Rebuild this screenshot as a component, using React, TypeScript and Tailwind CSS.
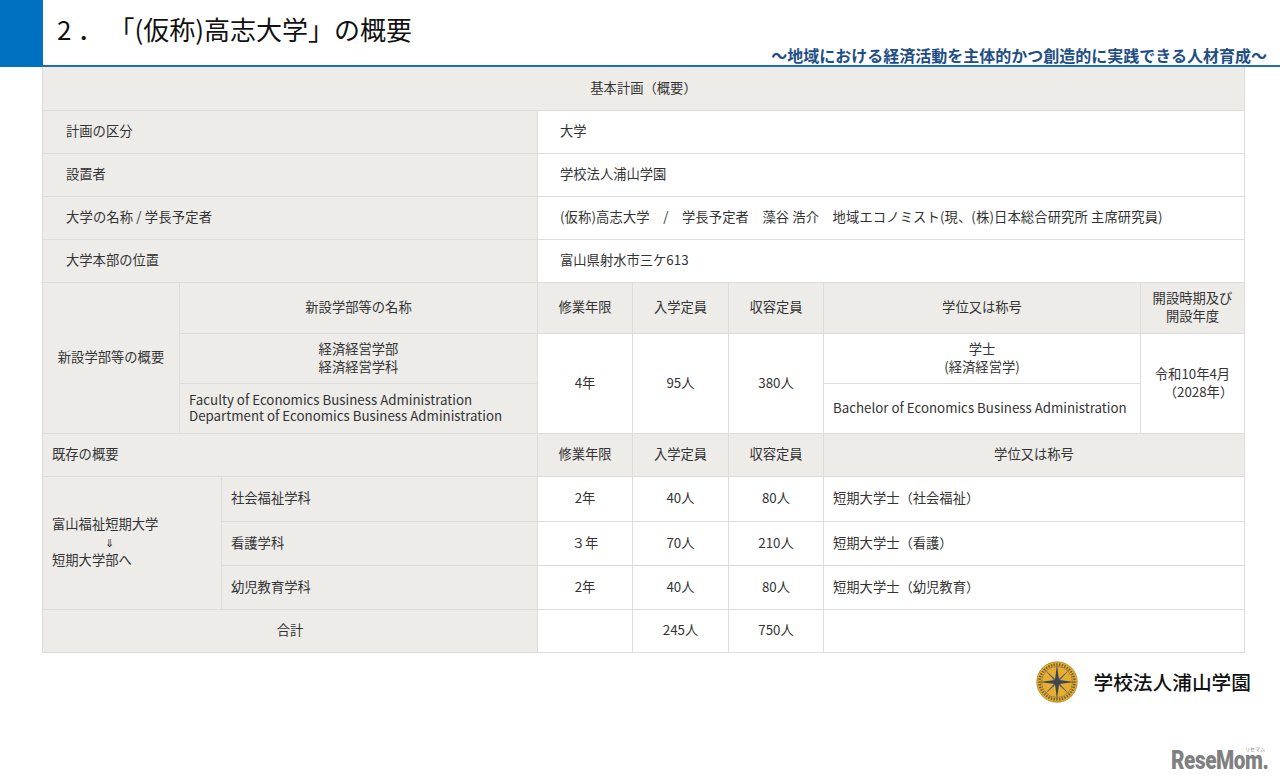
import type { ReactNode } from "react";

const gray = "bg-[#edece9]";
const white = "bg-white";

function Cell({
	className,
	children,
}: {
	className: string;
	children?: ReactNode;
}) {
	return <div className={`flex items-center pb-[2px] ${className}`}>{children}</div>;
}

function CompassLogo() {
	const ticks = Array.from({ length: 40 }, (_, i) => i * 9);
	return (
		<svg width="42" height="42" viewBox="0 0 42 42" aria-label="logo">
			<circle cx="21" cy="21" r="20.5" fill="#e6ad33" />
			<circle cx="21" cy="21" r="20.2" fill="none" stroke="#9a7a2e" strokeWidth="0.6" />
			<circle cx="21" cy="21" r="15.5" fill="none" stroke="#6b5c30" strokeWidth="0.5" />
			{ticks.map((deg) => (
				<rect
					key={deg}
					x="20.3"
					y="2.2"
					width="1.4"
					height="2.6"
					fill="#6f5f33"
					transform={`rotate(${deg} 21 21)`}
				/>
			))}
			<path d="M8 8 L21 19.6 L34 8 L22.4 21 L34 34 L21 22.4 L8 34 L19.6 21 Z" fill="#59606a" />
			<path
				d="M21 3.5 L23 19 L38.5 21 L23 23 L21 38.5 L19 23 L3.5 21 L19 19 Z"
				fill="#3d4550"
			/>
		</svg>
	);
}

function ResultRow({
	name,
	years,
	admission,
	capacity,
	degree,
}: {
	name: string;
	years: string;
	admission: string;
	capacity: string;
	degree: string;
}) {
	return (
		<>
			<Cell className={`${gray} pl-[9px]`}>{name}</Cell>
			<Cell className={`${white} justify-center`}>{years}</Cell>
			<Cell className={`${white} justify-center`}>{admission}</Cell>
			<Cell className={`${white} justify-center`}>{capacity}</Cell>
			<Cell className={`${white} col-span-2 pl-[9px]`}>{degree}</Cell>
		</>
	);
}

function InfoRow({ label, value }: { label: ReactNode; value: ReactNode }) {
	return (
		<>
			<Cell className={`${gray} col-span-3 pl-[23px]`}>{label}</Cell>
			<Cell className={`${white} col-span-5 pl-[22px]`}>{value}</Cell>
		</>
	);
}

export default function App() {
	return (
		<div className="h-[784px] w-[1280px] overflow-hidden bg-white font-['Noto_Sans_CJK_JP','Noto_Sans',sans-serif] text-[13.3px] leading-[18px] text-[#333]">
			<header className="flex h-[67px] border-b-2 border-[#1f6fb2]">
				<div className="h-[67px] w-[43px] shrink-0 bg-[#0070c0]" />
				<div className="relative flex-1">
					<h1 className="pl-[14px] pt-[10px] text-[26px] leading-[38px] whitespace-pre text-[#111]">
						<span className="mr-[6px]">2</span>．<span className="ml-[18px]">「(仮称)高志大学」の概要</span>
					</h1>
					<p className="absolute right-[13px] bottom-[-1px] text-[16px] leading-[22px] font-bold whitespace-nowrap text-[#1f4e86]">
						～地域における経済活動を主体的かつ創造的に実践できる人材育成～
					</p>
				</div>
			</header>

			<div className="ml-[42px] grid w-[1203px] grid-cols-[136px_41px_315px_94px_95px_94px_316px_103px] grid-rows-[43px_42px_42px_42px_42px_50px_49px_49px_42px_44px_43px_43px_42px] gap-px border border-t-0 border-[#dcdcda] bg-[#dcdcda]">
				<Cell className={`${gray} col-span-8 justify-center`}>基本計画（概要）</Cell>
				<InfoRow label="計画の区分" value="大学" />
				<InfoRow label="設置者" value="学校法人浦山学園" />
				<InfoRow
					label={<span className="tracking-[0.15px]">大学の名称 / 学長予定者</span>}
					value={
						<span className="tracking-[0.12px]">
							(仮称)高志大学　/　学長予定者　藻谷 浩介　地域エコノミスト(現、(株)日本総合研究所 主席研究員)
						</span>
					}
				/>
				<InfoRow label="大学本部の位置" value="富山県射水市三ケ613" />

				<Cell className={`${gray} row-span-3 justify-center`}>新設学部等の概要</Cell>
				<Cell className={`${gray} col-span-2 justify-center`}>新設学部等の名称</Cell>
				<Cell className={`${gray} justify-center`}>修業年限</Cell>
				<Cell className={`${gray} justify-center`}>入学定員</Cell>
				<Cell className={`${gray} justify-center`}>収容定員</Cell>
				<Cell className={`${gray} justify-center`}>学位又は称号</Cell>
				<Cell className={`${gray} justify-center text-center`}>
					<div>
						開設時期及び
						<br />
						開設年度
					</div>
				</Cell>

				<Cell className={`${gray} col-span-2 justify-center text-center`}>
					<div>
						経済経営学部
						<br />
						経済経営学科
					</div>
				</Cell>
				<Cell className={`${white} row-span-2 justify-center`}>4年</Cell>
				<Cell className={`${white} row-span-2 justify-center`}>95人</Cell>
				<Cell className={`${white} row-span-2 justify-center`}>380人</Cell>
				<Cell className={`${white} justify-center text-center`}>
					<div>
						学士
						<br />
						(経済経営学)
					</div>
				</Cell>
				<Cell className={`${white} row-span-2 justify-center text-center`}>
					<div>
						令和10年4月
						<br />
						<span className="ml-[12px]">（2028年）</span>
					</div>
				</Cell>
				<Cell className={`${gray} col-span-2 pl-[9px]`}>
					<div className="leading-[16px]">
						Faculty of Economics Business Administration
						<br />
						Department of Economics Business Administration
					</div>
				</Cell>
				<Cell className={`${white} pl-[9px]`}>Bachelor of Economics Business Administration</Cell>

				<Cell className={`${gray} col-span-3 pl-[9px]`}>既存の概要</Cell>
				<Cell className={`${gray} justify-center`}>修業年限</Cell>
				<Cell className={`${gray} justify-center`}>入学定員</Cell>
				<Cell className={`${gray} justify-center`}>収容定員</Cell>
				<Cell className={`${gray} col-span-2 justify-center`}>学位又は称号</Cell>

				<Cell className={`${gray} col-span-2 row-span-3 pl-[9px]`}>
					<div>
						<div>富山福祉短期大学</div>
						<div className="pl-[53px] text-[11px]">⇓</div>
						<div>短期大学部へ</div>
					</div>
				</Cell>
				<ResultRow name="社会福祉学科" years="2年" admission="40人" capacity="80人" degree="短期大学士（社会福祉）" />
				<ResultRow name="看護学科" years="３年" admission="70人" capacity="210人" degree="短期大学士（看護）" />
				<ResultRow name="幼児教育学科" years="2年" admission="40人" capacity="80人" degree="短期大学士（幼児教育）" />

				<Cell className={`${gray} col-span-3 justify-center`}>合計</Cell>
				<Cell className={white} />
				<Cell className={`${white} justify-center`}>245人</Cell>
				<Cell className={`${white} justify-center`}>750人</Cell>
				<Cell className={`${white} col-span-2`} />
			</div>

			<div className="mt-[8px] flex items-center justify-end pr-[29px]">
				<CompassLogo />
				<span className="ml-[16px] text-[19.7px] leading-[42px] font-medium text-[#111]">学校法人浦山学園</span>
			</div>

			<div className="mt-[46px] flex justify-end pr-[12px]">
				<div className="relative">
					<div className="origin-right scale-x-[0.83] font-['Roboto',sans-serif] text-[25px] leading-[24px] font-black tracking-[-0.5px] text-[#808080]">
						ReseMom.
					</div>
					<span className="absolute top-[-3px] right-[3px] text-[5px] leading-[6px] text-[#808080]">リセマム</span>
				</div>
			</div>
		</div>
	);
}
